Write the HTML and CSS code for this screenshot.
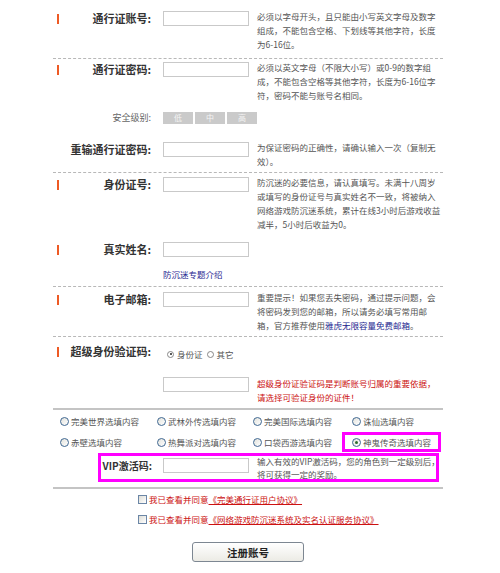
FILE: index.html
```html
<!DOCTYPE html>
<html lang="zh-CN">
<head>
<meta charset="utf-8">
<title>注册账号</title>
<link rel="stylesheet" href="styles.css">
</head>
<body>
<div class="form">
  <div class="row r1 sep">
    <div class="lab"><i class="bar"></i><span>通行证账号:</span></div>
    <input class="inp" type="text">
    <div class="desc">必须以字母开头，且只能由小写英文字母及数字<br>组成，不能包含空格、下划线等其他字符，长度<br>为6-16位。</div>
  </div>
  <div class="row r2">
    <div class="lab"><i class="bar"></i><span>通行证密码:</span></div>
    <input class="inp" type="password">
    <div class="desc">必须以英文字母（不限大小写）或0-9的数字组<br>成，不能包含空格等其他字符，长度为6-16位字<br>符，密码不能与账号名相同。</div>
  </div>
  <div class="row sec">
    <div class="sec-lab">安全级别:</div>
    <div class="levels"><span>低</span><span>中</span><span>高</span></div>
  </div>
  <div class="row r3 sep">
    <div class="lab"><span>重输通行证密码:</span></div>
    <input class="inp" type="password">
    <div class="desc">为保证密码的正确性，请确认输入一次（复制无<br>效）。</div>
  </div>
  <div class="row r4">
    <div class="lab"><i class="bar"></i><span>身份证号:</span></div>
    <input class="inp" type="text">
    <div class="desc">防沉迷的必要信息，请认真填写。未满十八周岁<br>或填写的身份证号与真实姓名不一致，将被纳入<br>网络游戏防沉迷系统，累计在线3小时后游戏收益<br>减半，5小时后收益为0。</div>
  </div>
  <div class="row r5 sep">
    <div class="lab"><i class="bar"></i><span>真实姓名:</span></div>
    <div class="stack">
      <input class="inp" type="text">
      <a class="topic" href="#">防沉迷专题介绍</a>
    </div>
  </div>
  <div class="row r6 sep">
    <div class="lab"><i class="bar"></i><span>电子邮箱:</span></div>
    <input class="inp" type="text">
    <div class="desc">重要提示！如果您丢失密码，通过提示问题，会<br>将密码发到您的邮箱，所以请务必填写常用邮<br>箱，官方推荐使用<a class="mail" href="#">雅虎无限容量免费邮箱</a>。</div>
  </div>
  <div class="row r7">
    <div class="lab"><i class="bar"></i><span>超级身份验证码:</span></div>
    <div class="idtype">
      <span class="mini on"></span><span class="t">身份证</span>
      <span class="mini"></span><span class="t">其它</span>
    </div>
    <input class="inp r7-inp" type="text">
    <div class="desc red r7-desc">超级身份证验证码是判断账号归属的重要依据，<br>请选择可验证身份的证件！</div>
  </div>

  <div class="games">
    <div class="opts">
      <label class="opt"><span class="rd"></span>完美世界选填内容</label>
      <label class="opt"><span class="rd"></span>武林外传选填内容</label>
      <label class="opt"><span class="rd"></span>完美国际选填内容</label>
      <label class="opt"><span class="rd"></span>诛仙选填内容</label>
      <label class="opt"><span class="rd"></span>赤壁选填内容</label>
      <label class="opt"><span class="rd"></span>热舞派对选填内容</label>
      <label class="opt"><span class="rd"></span>口袋西游选填内容</label>
      <label class="opt hl"><span class="rd on"></span>神鬼传奇选填内容</label>
    </div>
    <div class="vip">
      <div class="vip-lab">VIP激活码:</div>
      <input class="inp" type="text">
      <div class="desc vip-desc">输入有效的VIP激活码，您的角色到一定级别后，<br>将可获得一定的奖励。</div>
    </div>
  </div>

  <div class="agree">
    <div class="ck-row"><span class="ck"></span><span class="red">我已查看并同意</span><a class="red-link" href="#"> 《完美通行证用户协议》</a></div>
    <div class="ck-row"><span class="ck"></span><span class="red">我已查看并同意</span><a class="red-link" href="#"> 《网络游戏防沉迷系统及实名认证服务协议》</a></div>
  </div>

  <div class="submit"><button class="btn" type="button">注册账号</button></div>
</div>
</body>
</html>
```

FILE: styles.css
```css
* { box-sizing: border-box; }

body {
  margin: 0;
  background: #fff;
  font-family: "Noto Sans CJK SC", "Liberation Sans", sans-serif;
  color: #444;
}

.form {
  width: 390px;
  margin-left: 53px;
}

.row {
  display: grid;
  grid-template-columns: 110px 94px 186px;
  align-items: start;
}

.sep { border-bottom: 1px dashed #b8b8b8; }

.r1 { padding: 9px 0 7px; }
.r2 { padding: 1px 0 0; }
.sec { padding-top: 10px; }
.r3 { padding: 16px 0 4px; }
.r4 { padding: 2px 0 0; }
.r5 { padding: 9px 0 5px; }
.r6 { padding: 3px 0 4px; }
.r7 { padding: 5px 0 0; }

.lab {
  display: flex;
  align-items: center;
  height: 15px;
  margin-top: 2px;
  padding-right: 12px;
}

.bar {
  width: 2px;
  height: 10px;
  margin-left: 4px;
  background: #ee5a24;
}

.lab span {
  margin-left: auto;
  font-size: 11px;
  line-height: 15px;
  font-weight: bold;
  color: #333;
  white-space: nowrap;
}

.inp {
  display: block;
  width: 86px;
  height: 15px;
  margin: 2px 0 0;
  padding: 0;
  border: 1px solid #c9c9c9;
  background: #fff;
  outline: none;
}

.desc {
  font-size: 8.5px;
  line-height: 14px;
  color: #555;
  white-space: nowrap;
}

/* security level */
.sec-lab {
  height: 12px;
  padding-right: 12px;
  text-align: right;
  font-size: 9px;
  line-height: 12px;
  color: #666;
}

.levels {
  display: flex;
  gap: 2px;
  grid-column: 2 / 4;
}

.levels span {
  width: 30px;
  height: 12px;
  background: #cacaca;
  color: #f4f4f4;
  font-size: 8px;
  line-height: 12px;
  text-align: center;
}

/* real name */
.stack { display: flex; flex-direction: column; }

.topic {
  margin-top: 10px;
  font-size: 8.5px;
  line-height: 14px;
  color: #1e2490;
  text-decoration: none;
  white-space: nowrap;
}

.mail {
  color: #23278f;
  text-decoration: none;
}

/* super verification */
.r7 .lab { grid-row: 1; grid-column: 1; }

.idtype {
  grid-row: 1;
  grid-column: 2 / 4;
  display: flex;
  align-items: center;
  height: 14px;
  margin: 5px 0 0 4px;
  font-size: 8.5px;
  color: #555;
}

.mini {
  width: 7px;
  height: 7px;
  border: 1px solid #888;
  border-radius: 50%;
  background: #fff;
  margin-right: 3px;
  position: relative;
}

.mini.on::after {
  content: "";
  position: absolute;
  left: 1.5px;
  top: 1.5px;
  width: 2px;
  height: 2px;
  border-radius: 50%;
  background: #222;
}

.idtype .t { margin-right: 4px; }

.r7-inp { grid-row: 2; grid-column: 2; margin-top: 16px; }
.r7-desc { grid-row: 2; grid-column: 3; margin-top: 15px; padding-bottom: 4px; }

.red { color: #cc1111; }

/* games */
.games {
  border-top: 2px solid #c4c4c4;
  border-bottom: 2px solid #c4c4c4;
  padding: 4px 0 5px;
}

.opts {
  display: grid;
  grid-template-columns: 97px 96px 99px 91px;
  row-gap: 7px;
  padding-left: 7px;
}

.opt {
  display: flex;
  align-items: center;
  height: 14px;
  font-size: 8.5px;
  color: #555;
  white-space: nowrap;
}

.rd {
  width: 9px;
  height: 9px;
  margin-right: 2px;
  border: 1px solid #3f6791;
  border-radius: 50%;
  background: linear-gradient(135deg, #e2e2dc, #fff);
  position: relative;
  flex: none;
}

.rd.on::after {
  content: "";
  position: absolute;
  left: 2px;
  top: 2px;
  width: 3px;
  height: 3px;
  border-radius: 50%;
  background: #2f6b2f;
}

.opt.hl {
  width: 93px;
  margin-left: -7px;
  padding-left: 7px;
  outline: 3px solid #f0f;
}

.vip {
  display: grid;
  grid-template-columns: 62px 94px auto;
  align-items: start;
  width: 341px;
  height: 29px;
  margin: 4px 0 0 45px;
  border: 3px solid #f0f;
}

.vip-lab {
  height: 15px;
  margin-top: 2px;
  padding-right: 11px;
  text-align: right;
  font-size: 10px;
  line-height: 15px;
  font-weight: bold;
  color: #333;
  white-space: nowrap;
}

.vip-desc {
  margin-top: -1px;
  line-height: 13px;
}

/* agreements */
.agree {
  padding: 3px 0 0 85px;
  display: flex;
  flex-direction: column;
  gap: 6px;
}

.ck-row {
  display: flex;
  align-items: center;
  height: 14px;
  font-size: 8.5px;
  white-space: nowrap;
}

.ck {
  width: 9px;
  height: 9px;
  margin-right: 2px;
  border: 1px solid #6b86a6;
  background: linear-gradient(135deg, #dcdcd6, #fff);
  flex: none;
}

.red-link {
  color: #cc1111;
  text-decoration: underline;
}

.submit {
  display: flex;
  justify-content: center;
  padding-top: 16px;
}

.btn {
  width: 112px;
  height: 20px;
  padding: 0;
  border: 1px solid #7d8792;
  border-radius: 3px;
  background: linear-gradient(#ffffff, #ecebe5);
  font-family: "Noto Sans CJK SC", sans-serif;
  font-size: 10.5px;
  font-weight: bold;
  color: #222;
}
```
